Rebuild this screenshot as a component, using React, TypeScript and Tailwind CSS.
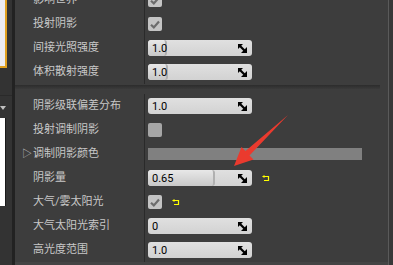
import React from 'react';

const FONT = { fontFamily: 'Roboto, "Noto Sans CJK SC", "Noto Sans", sans-serif' };

const ResizeIcon: React.FC = () => (
  <svg width="9" height="9" viewBox="0 0 9 9" className="absolute right-[5px] top-[4px]">
    <polygon points="0,0 5,0 0,5" fill="#000" />
    <line x1="1.5" y1="1.5" x2="6.5" y2="6.5" stroke="#000" strokeWidth="2.2" />
    <polygon points="9,9 9,3 3,9" fill="#000" />
  </svg>
);

const ResetIcon: React.FC = () => (
  <svg width="8" height="7" viewBox="0 0 8 7">
    <path d="M1.5 1.5 H6.5 V5.5 H2" stroke="#ffff00" strokeWidth="1.2" fill="none" />
    <polygon points="0,1.5 2.5,0 2.5,3" fill="#ffff00" />
  </svg>
);

const Slider: React.FC<{ value: string; fill?: number }> = ({ value, fill = 0 }) => (
  <div className="relative flex h-[16px] w-[104px] items-center overflow-hidden rounded-[3px] bg-gradient-to-b from-[#e0e0e0] to-[#d2d2d2]">
    {fill > 0 && (
      <div
        className="absolute left-0 top-0 bottom-0 rounded-[3px] border-r-2 border-[#b0b0b0] bg-gradient-to-b from-[#e8e8e8] to-[#c8c8c8]"
        style={{ width: fill }}
      />
    )}
    <span className="relative pl-[4px] text-[11px] leading-none text-black">{value}</span>
    <ResizeIcon />
  </div>
);

const Check: React.FC<{ checked?: boolean }> = ({ checked }) => (
  <div
    className={
      checked
        ? 'flex h-[14px] w-[14px] items-center justify-center rounded-[2px] bg-[#c4c4c4]'
        : 'h-[14px] w-[14px] rounded-[2px] bg-[#a6a6a6]'
    }
  >
    {checked && (
      <svg width="10" height="9" viewBox="0 0 10 9">
        <path d="M1 4.8 L3.8 7.4 L9 1.5" stroke="#6c6c6c" strokeWidth="2.2" fill="none" />
      </svg>
    )}
  </div>
);

const Row: React.FC<{ label: string; expand?: boolean; children?: React.ReactNode }> = ({
  label,
  expand,
  children,
}) => (
  <div className="flex h-[24px]">
    <div className="flex w-[130px] items-center border-r border-[#2a2a2a] pl-[7px]">
      <span className="w-[11px] text-[10px] leading-none text-[#c4c4c4]">{expand ? '▷' : ''}</span>
      <span className="text-[11px] text-[#c8c8c8]">{label}</span>
    </div>
    <div className="flex flex-1 items-center gap-[10px] pl-[3px]">{children}</div>
  </div>
);

export default function App() {
  return (
    <div className="relative flex h-[265px] w-[393px] overflow-hidden bg-[#383838]" style={FONT}>
      {/* left docked panels */}
      <div className="flex w-[15px]">
        <div className="flex w-[12px] flex-col bg-[#333333]">
          <div className="h-[68px] w-[7px] border-r-2 border-b-2 border-[#e0a020] bg-[#ececf2]" />
          <div className="mt-[27px] h-px w-[12px] bg-[#2a2a2a]" />
          <div className="mt-[10px] h-0 w-0 border-l-[3px] border-r-[3px] border-t-[4px] border-l-transparent border-r-transparent border-t-[#c0c0c0]" />
          <div className="mt-[8px] h-[88px] w-[6px] border-r border-[#1a1a1a] bg-white" />
        </div>
        <div className="w-[3px] bg-[#222222]" />
      </div>

      {/* details panel */}
      <div className="flex w-[373px] flex-col bg-[#3d3d3d]">
        <div className="-mt-[12px] flex flex-col">
          <Row label="影响世界">
            <Check checked />
          </Row>
          <Row label="投射阴影">
            <Check checked />
          </Row>
          <Row label="间接光照强度">
            <Slider value="1.0" fill={19} />
          </Row>
          <Row label="体积散射强度">
            <Slider value="1.0" fill={20} />
          </Row>
        </div>
        <div className="flex h-[10px] items-start pt-[1px]">
          <div className="h-[4px] w-[365px] bg-gradient-to-b from-[#2c2c2c] to-[#3a3a3a]" />
        </div>
        <div className="flex flex-col">
          <Row label="阴影级联偏差分布">
            <Slider value="1.0" />
          </Row>
          <Row label="投射调制阴影">
            <Check />
          </Row>
          <Row label="调制阴影颜色" expand>
            <div className="h-[12px] w-[214px] bg-[#808080]" />
          </Row>
          <Row label="阴影量">
            <Slider value="0.65" fill={67} />
            <ResetIcon />
          </Row>
          <Row label="大气/雾太阳光">
            <Check checked />
            <ResetIcon />
          </Row>
          <Row label="大气太阳光索引">
            <Slider value="0" />
          </Row>
          <Row label="高光度范围">
            <Slider value="1.0" />
          </Row>
        </div>
        <div className="flex-1 bg-[#444444]" />
      </div>
      <div className="w-px bg-[#5a5a5a]" />
      <div className="flex-1 bg-[#383838]" />

      {/* red annotation arrow */}
      <svg className="pointer-events-none absolute left-0 top-0" width="393" height="265">
        <polygon
          points="288,115 249.5,155.5 253.5,159.5 234,166 241.5,147 245.5,151"
          fill="#ea3a2e"
        />
      </svg>
    </div>
  );
}
